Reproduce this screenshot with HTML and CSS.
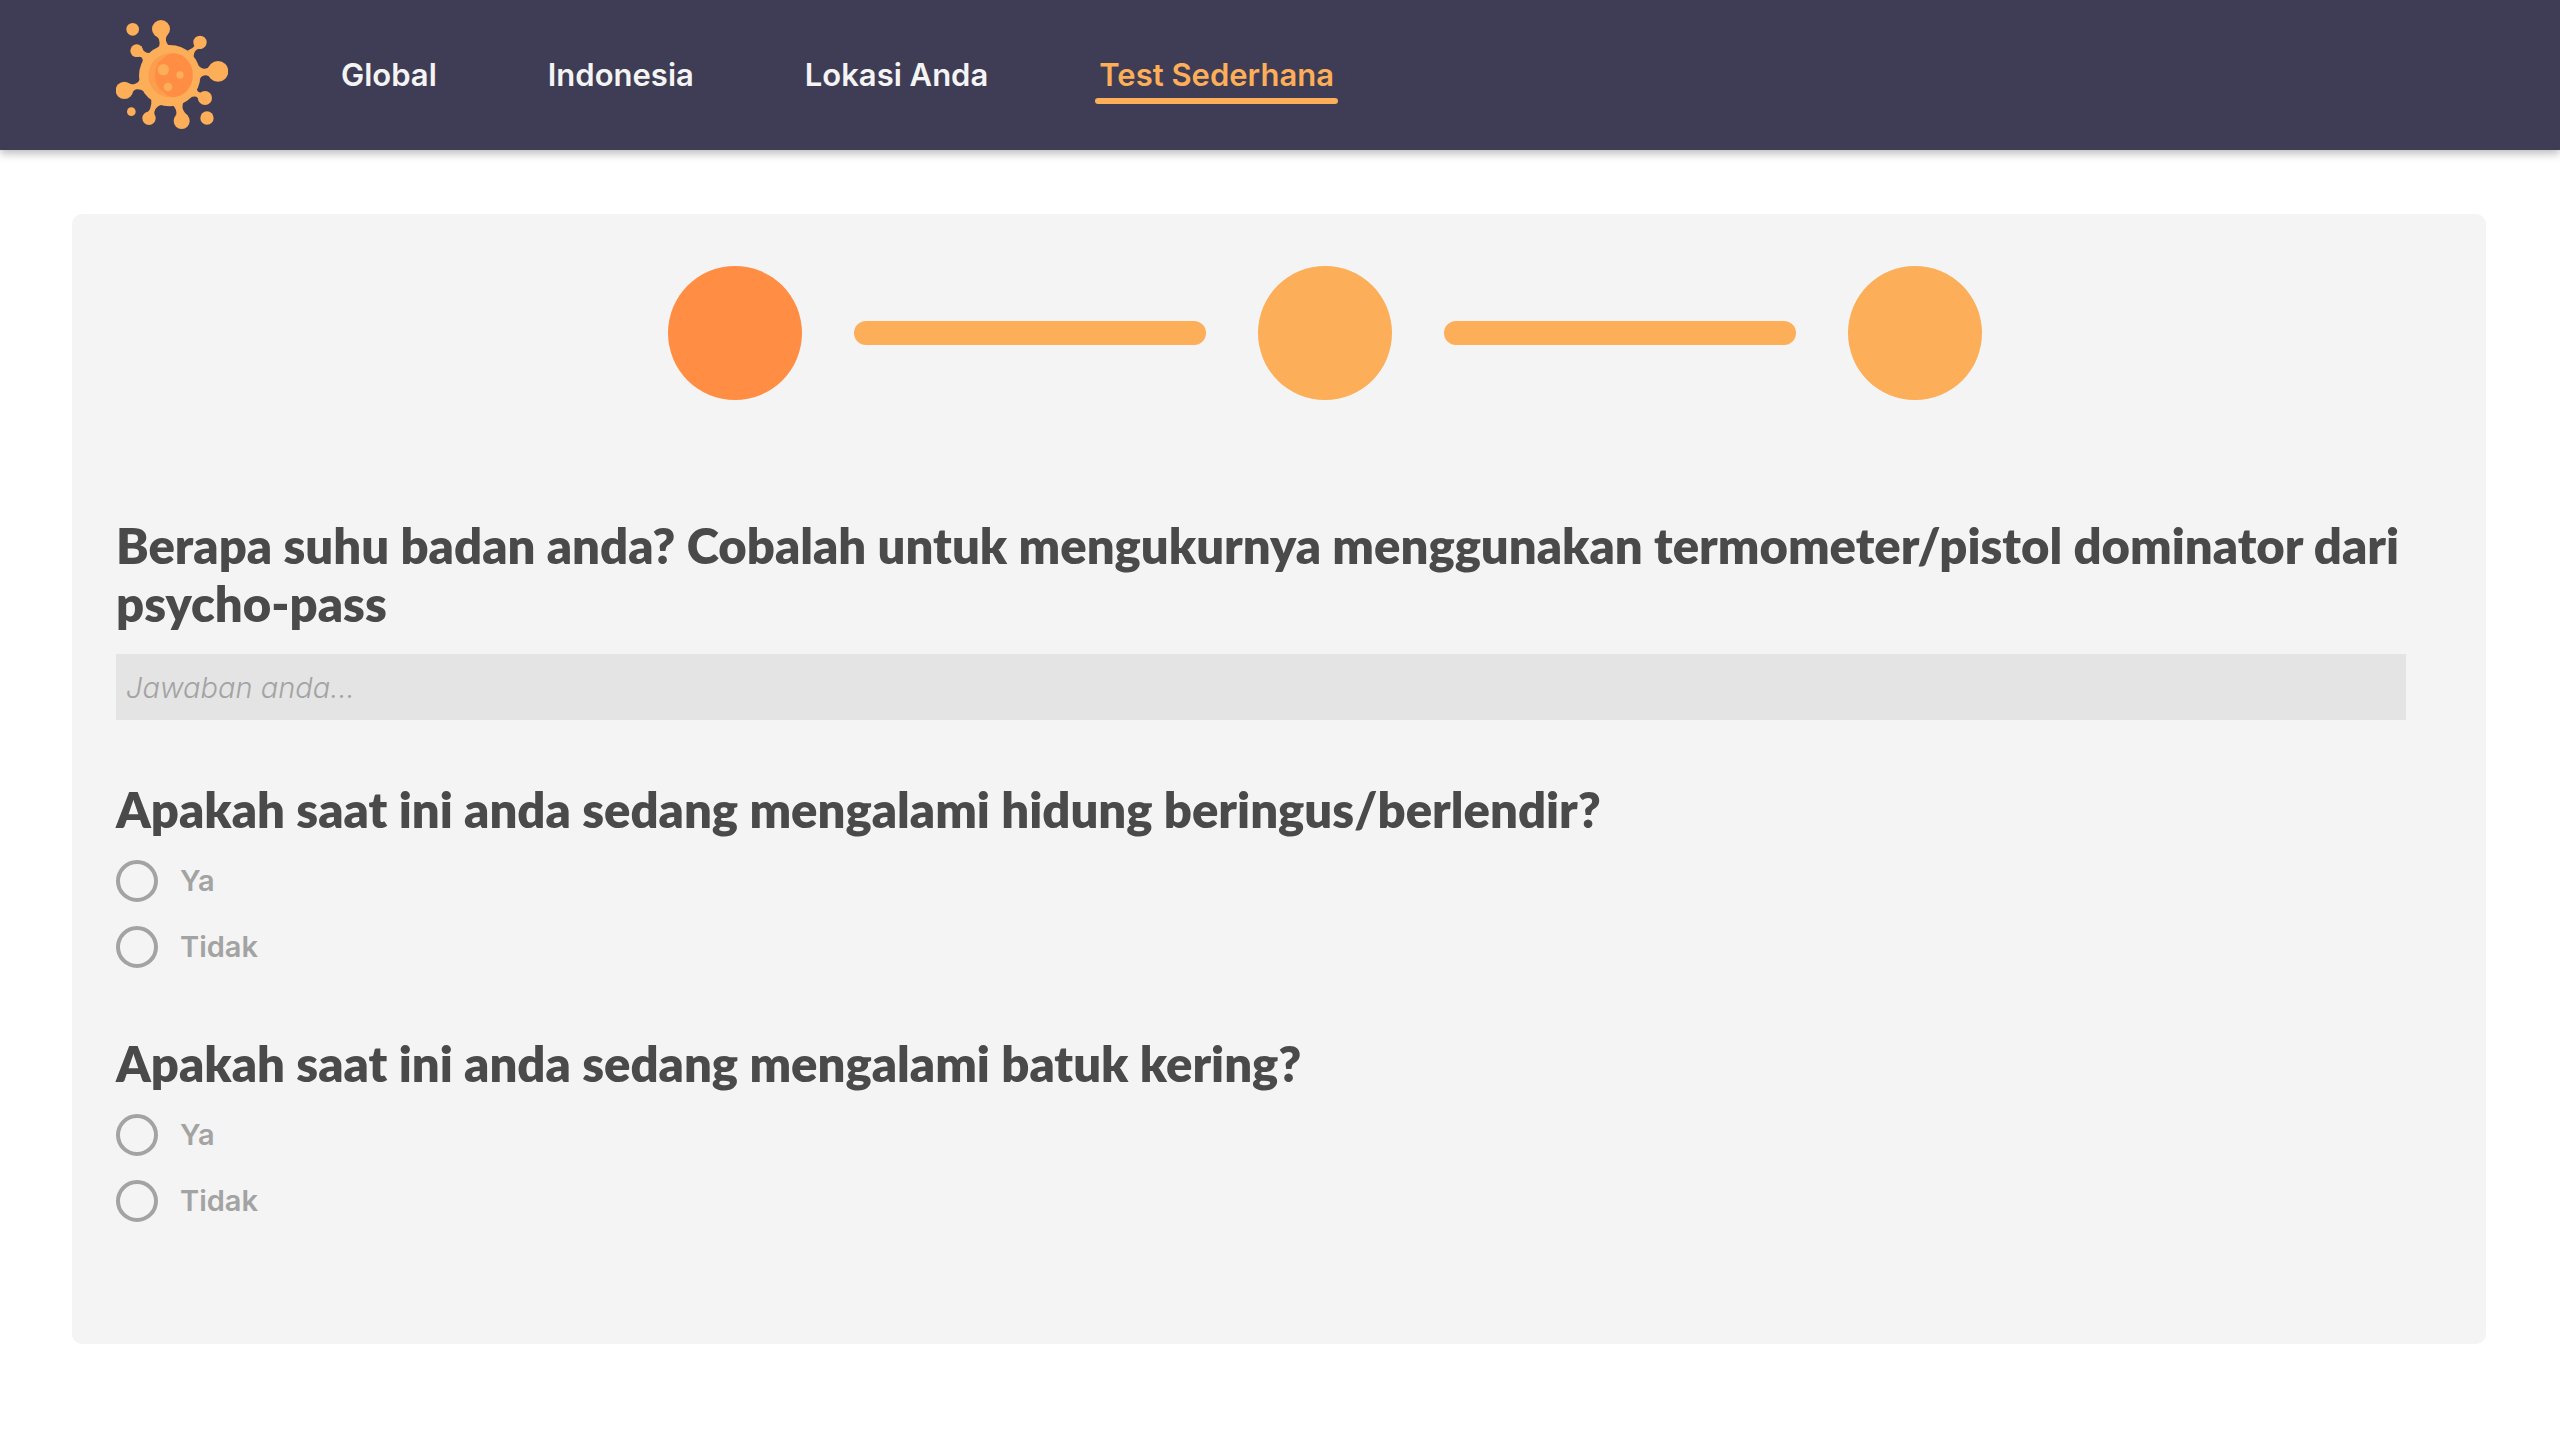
FILE: index.html
```
<!DOCTYPE html>
<html lang="id">
<head>
<meta charset="utf-8">
<meta name="viewport" content="width=device-width, initial-scale=1">
<title>Test Sederhana</title>
<link rel="stylesheet" href="styles.css">
</head>
<body>
<header class="header">
  <a class="logo" href="#" aria-label="Beranda">
    <svg class="logo-image" viewBox="48 29 336 330" aria-hidden="true">
      <g fill="#fcae59">
        <circle cx="98" cy="57" r="19"/>
        <circle cx="94" cy="304" r="13"/>
        <circle cx="321" cy="323" r="20"/>
        <circle cx="183" cy="56" r="27"/>
        <circle cx="300" cy="96" r="20"/>
        <circle cx="354" cy="183" r="31"/>
        <circle cx="315" cy="263" r="21"/>
        <circle cx="245" cy="332" r="24"/>
        <circle cx="147" cy="324" r="20"/>
        <circle cx="73" cy="240" r="26"/>
        <circle cx="110" cy="121" r="19"/>
        <circle cx="209" cy="196" r="92"/>
        <path d="M168 74Q178 84 179 98Q180 106 172 113L212 110Q200 102 198 92Q196 84 202 72Z"/>
        <path d="M285 104Q281 113 262 121L281 141Q281 126 288 120Q294 113 308 115Z"/>
        <path d="M328 168Q324 176 312 175Q303 175 294 165L300 206Q304 195 318 195Q326 195 332 204Z"/>
        <path d="M303 247Q291 247 290 233L270 261Q283 257 289 259Q296 262 297 273Z"/>
        <path d="M228 316Q233 298 218 284L250 275Q245 290 250 300Q254 309 264 316Z"/>
        <path d="M134 309Q148 304 151 293Q155 279 154 268L188 283Q174 284 166 297Q161 306 163 315Z"/>
        <path d="M86 218Q94 225 106 220Q118 216 121 204L131 243Q122 236 110 237Q100 239 95 252Z"/>
        <path d="M124 107Q128 121 137 126Q144 130 154 127L128 160Q130 146 124 141Q118 138 106 139Z"/>
      </g>
      <circle cx="211" cy="195" r="66" fill="#fd9e4e"/>
      <path d="M221 129A57 65 0 0 1 221 260Q204 260 190 245Q165 230 165 195Q165 160 188 146Q203 130 221 129Z" fill="#ff8d43"/>
      <g fill="#fcae59">
        <circle cx="190" cy="178" r="17"/>
        <circle cx="240" cy="194" r="11"/>
        <circle cx="204" cy="230" r="13"/>
      </g>
    </svg>
  </a>
  <nav class="nav" aria-label="Utama">
    <a class="nav-link" href="#">Global</a>
    <a class="nav-link" href="#">Indonesia</a>
    <a class="nav-link" href="#">Lokasi Anda</a>
    <a class="nav-link nav-link-active" href="#" aria-current="page">Test Sederhana</a>
  </nav>
</header>
<main>
  <form class="panel">
    <div class="steps" aria-hidden="true">
      <span class="step step-current"></span>
      <span class="step-line"></span>
      <span class="step"></span>
      <span class="step-line"></span>
      <span class="step"></span>
    </div>
    <div class="question-text">
      <label class="question" for="suhu">Berapa suhu badan anda? Cobalah untuk mengukurnya menggunakan termometer/pistol dominator dari psycho-pass</label>
      <input class="answer" id="suhu" type="text" placeholder="Jawaban anda...">
    </div>
    <fieldset class="question-choice">
      <legend class="question">Apakah saat ini anda sedang mengalami hidung beringus/berlendir?</legend>
      <div class="choices">
        <label class="choice"><input class="radio" type="radio" name="hidung" value="ya">Ya</label>
        <label class="choice"><input class="radio" type="radio" name="hidung" value="tidak">Tidak</label>
      </div>
    </fieldset>
    <fieldset class="question-choice">
      <legend class="question">Apakah saat ini anda sedang mengalami batuk kering?</legend>
      <div class="choices">
        <label class="choice"><input class="radio" type="radio" name="batuk" value="ya">Ya</label>
        <label class="choice"><input class="radio" type="radio" name="batuk" value="tidak">Tidak</label>
      </div>
    </fieldset>
  </form>
</main>
</body>
</html>
```
FILE: styles.css
```
* {
  box-sizing: border-box;
}

body {
  margin: 0;
  background: #fff;
  color: #4a4a4a;
  font-family: Inter, "Open Sans", sans-serif;
}

.header {
  display: flex;
  align-items: center;
  gap: 109px;
  min-height: 150px;
  padding: 0 116px;
  background: #3f3d56;
  box-shadow: 0 4px 8px rgba(0, 0, 0, 0.25);
}

.logo,
.logo-image {
  display: block;
  width: 112px;
  height: 110px;
}

.nav {
  display: flex;
  gap: 103px;
}

.nav-link {
  padding: 6px 4px 0;
  color: #f4f4f4;
  font-size: 31px;
  font-weight: 600;
  line-height: 46px;
  text-decoration: none;
}

.nav-link::after {
  content: "";
  display: block;
  height: 6px;
  margin: 0 -4px;
  border-radius: 3px;
}

.nav-link-active {
  color: #fcae59;
}

.nav-link-active::after {
  background: #fcae59;
}

.panel {
  margin: 64px 74px 96px 72px;
  padding: 52px 80px 122px 44px;
  border-radius: 10px;
  background: #f4f4f4;
}

.steps {
  display: flex;
  align-items: center;
  justify-content: center;
  gap: 52px;
  margin-bottom: 116px;
  padding-left: 128px;
}

.step {
  width: 134px;
  height: 134px;
  border-radius: 50%;
  background: #fcae59;
}

.step-current {
  background: #ff8d43;
}

.step-line {
  width: 352px;
  height: 24px;
  border-radius: 12px;
  background: #fcae59;
}

.question {
  display: block;
  margin-bottom: 22px;
  padding: 0;
  font-family: Lato, sans-serif;
  font-size: 49px;
  font-weight: 800;
  line-height: 58px;
}

.question-text {
  margin-bottom: 60px;
}

.answer {
  display: block;
  width: 100%;
  height: 66px;
  padding: 0 10px;
  border: 0;
  border-radius: 0;
  background: #e4e4e4;
  color: #4a4a4a;
  font: 29px Inter, sans-serif;
}

.answer::placeholder {
  color: #a3a3a3;
  font-style: italic;
  font-weight: 300;
  opacity: 1;
}

.question-choice {
  margin: 0;
  padding: 0;
  border: 0;
}

.question-choice + .question-choice {
  margin-top: 66px;
}

.choices {
  display: flex;
  flex-direction: column;
  align-items: flex-start;
  gap: 24px;
}

.choice {
  display: flex;
  align-items: center;
  gap: 22px;
  color: #a3a3a3;
  font-size: 29px;
  font-weight: 600;
  line-height: 42px;
}

.radio {
  appearance: none;
  width: 42px;
  height: 42px;
  margin: 0;
  border: 4px solid #a3a3a3;
  border-radius: 50%;
}

.radio:checked {
  background: radial-gradient(#ff8d43 50%, transparent 55%);
}
```
